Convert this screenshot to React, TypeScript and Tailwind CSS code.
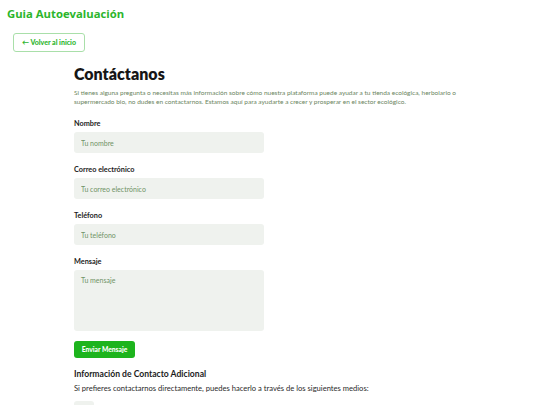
import React, { useState } from 'react';

const fieldClass =
  'block w-[190px] h-[21px] rounded-[3px] bg-[#eff2ee] px-[7px] text-[7px] text-[#3f5a36] placeholder:text-[#6f9266] outline-none';

const App = () => {
  const [form, setForm] = useState({ nombre: '', correo: '', telefono: '', mensaje: '' });

  const update = (key: keyof typeof form) => (
    e: React.ChangeEvent<HTMLInputElement | HTMLTextAreaElement>
  ) => setForm({ ...form, [key]: e.target.value });

  return (
    <div className="min-h-[405px] bg-white font-['Lato',sans-serif] text-[#1c1c1c]">
      <header className="px-[7px] pt-[6px]">
        <h1 className="font-['Open_Sans',sans-serif] text-[11.3px] leading-[15px] font-bold text-[#2cb52c]">
          Guia Autoevaluación
        </h1>
        <button className="mt-[12px] ml-[6px] h-[19px] w-[72px] rounded-[3px] border border-[#a9dfa9] text-[7px] font-black text-[#2cb52c]">
          ← Volver al inicio
        </button>
      </header>

      <main className="mx-auto mt-[12px] w-[392px]">
        <h2 className="text-[16px] leading-[20px] font-extrabold text-[#161616]">
          Contáctanos
        </h2>
        <p className="mt-[4px] text-[6.5px] leading-[9px] text-[#6b8561]">
          Si tienes alguna pregunta o necesitas más información sobre cómo nuestra
          plataforma puede ayudar a tu tienda ecológica, herbolario o supermercado
          bio, no dudes en contactarnos. Estamos aquí para ayudarte a crecer y
          prosperar en el sector ecológico.
        </p>

        <form className="mt-[13px]" onSubmit={(e) => e.preventDefault()}>
          <label className="block text-[7.3px] leading-[9px] font-bold">Nombre</label>
          <input
            className={`${fieldClass} mt-[4px]`}
            placeholder="Tu nombre"
            value={form.nombre}
            onChange={update('nombre')}
          />

          <label className="mt-[12px] block text-[7.3px] leading-[9px] font-bold">
            Correo electrónico
          </label>
          <input
            className={`${fieldClass} mt-[4px]`}
            placeholder="Tu correo electrónico"
            value={form.correo}
            onChange={update('correo')}
          />

          <label className="mt-[12px] block text-[7.3px] leading-[9px] font-bold">
            Teléfono
          </label>
          <input
            className={`${fieldClass} mt-[4px]`}
            placeholder="Tu teléfono"
            value={form.telefono}
            onChange={update('telefono')}
          />

          <label className="mt-[12px] block text-[7.3px] leading-[9px] font-bold">
            Mensaje
          </label>
          <textarea
            className="mt-[4px] block h-[61px] w-[190px] resize-none rounded-[3px] bg-[#eff2ee] px-[7px] py-[5px] text-[7px] text-[#3f5a36] outline-none placeholder:text-[#6f9266]"
            placeholder="Tu mensaje"
            value={form.mensaje}
            onChange={update('mensaje')}
          />

          <button
            type="submit"
            className="mt-[10px] h-[17px] w-[61px] rounded-[3px] bg-[#1db41d] text-[6.7px] font-black text-white"
          >
            Enviar Mensaje
          </button>
        </form>

        <h3 className="mt-[11px] text-[8.6px] leading-[11px] font-bold">
          Información de Contacto Adicional
        </h3>
        <p className="mt-[4px] text-[7.6px] leading-[9px] text-[#2a2a2a]">
          Si prefieres contactarnos directamente, puedes hacerlo a través de los
          siguientes medios:
        </p>
        <div className="mt-[8px] h-[10px] w-[20px] rounded-[3px] bg-[#eff2ee]" />
      </main>
    </div>
  );
};

export default App;
